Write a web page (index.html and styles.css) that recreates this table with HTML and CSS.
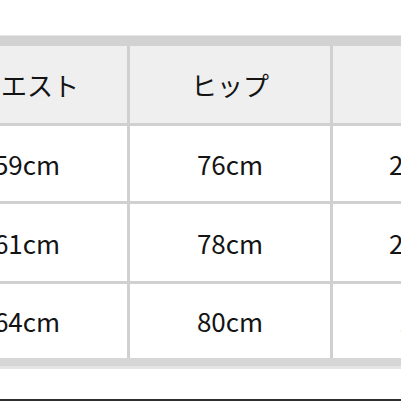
FILE: index.html
```html
<!DOCTYPE html>
<html lang="ja">
<head>
<meta charset="utf-8">
<link rel="stylesheet" href="styles.css">
</head>
<body>
<div class="page">
  <div class="table">
    <div class="band band-top"></div>
    <div class="grid">
      <div class="cell head">ウエスト</div>
      <div class="cell head">ヒップ</div>
      <div class="cell head">股下</div>

      <div class="cell r1">59cm</div>
      <div class="cell r1">76cm</div>
      <div class="cell r1">23.5cm</div>

      <div class="cell r2">61cm</div>
      <div class="cell r2">78cm</div>
      <div class="cell r2">24.5cm</div>

      <div class="cell r3">64cm</div>
      <div class="cell r3">80cm</div>
      <div class="cell r3">25cm</div>
    </div>
    <div class="band band-bottom"></div>
  </div>
  <div class="rule"></div>
</div>
</body>
</html>
```

FILE: styles.css
```css
html, body {
  margin: 0;
  padding: 0;
  background: #ffffff;
}

.page {
  width: 401px;
  height: 401px;
  overflow: hidden;
  display: flex;
  flex-direction: column;
  font-family: "Noto Sans CJK JP", "Noto Sans", sans-serif;
  color: #141414;
}

.table {
  margin-top: 35px;
  margin-left: -73px;
  width: 606px;
  flex: none;
}

.band-top {
  height: 11px;
  background: linear-gradient(#e6e6e6 0 1px, #d2d2d2 1px);
}

.band-bottom {
  height: 11px;
  background: linear-gradient(#d6d6d6 0 8px, #e4e4e4 8px);
}

.grid {
  display: grid;
  grid-template-columns: 200px 200px 200px;
  grid-template-rows: 77px 75px 77px 74px;
  gap: 3px;
  background: #d0d0d0;
}

.cell {
  display: flex;
  align-items: center;
  justify-content: center;
  font-size: 26px;
  line-height: 1;
  background: #ffffff;
}

.cell.head {
  background: #efefef;
}

.rule {
  margin-top: auto;
  height: 2px;
  background: #2e2e2e;
  flex: none;
}
```
